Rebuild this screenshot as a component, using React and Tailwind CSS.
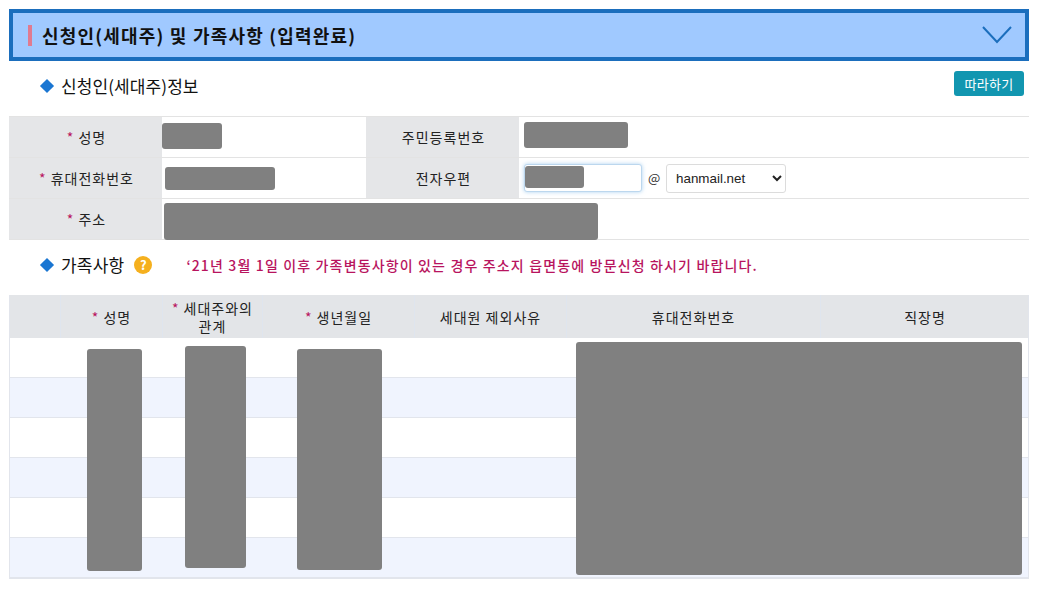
const FONT = "font-['Malgun_Gothic','Noto_Sans_CJK_KR','Liberation_Sans',sans-serif]"

const Star = () => <span className="text-[#b8145e] mr-1">*</span>

// grey scribble that hides personal data
const Redact = ({ className }) => (
    <div className={`absolute bg-[#808080] rounded-[3px] ${className}`}></div>
)

const Diamond = () => (
    <span className="inline-block w-[10px] h-[10px] rotate-45 bg-[#1a76d2] shrink-0"></span>
)

const Label = ({ children, required }) => (
    <div className="bg-[#e5e6e8] flex items-center justify-center text-sm tracking-[1px] pb-px pl-[2px] text-[#222]">
        {required && <Star />}
        {children}
    </div>
)

const columns = [
    { key: 'blank', label: '' },
    { key: 'name', label: '성명', required: true },
    { key: 'relation', label: '세대주와의 관계', required: true, wrap: true },
    { key: 'birth', label: '생년월일', required: true },
    { key: 'reason', label: '세대원 제외사유' },
    { key: 'phone', label: '휴대전화번호' },
    { key: 'work', label: '직장명' },
]

const rows = [0, 1, 2, 3, 4, 5]

const App = () => {
    return (
        <div className={`w-[1037px] h-[592px] bg-white overflow-hidden pt-[9px] pl-[9px] text-[#222] ${FONT}`}>
            {/* Section header */}
            <div className="w-[1020px] h-[52px] bg-[#a0c9ff] border-4 border-[#1b6ebd] flex items-center justify-between pl-[15px] pr-[13px]">
                <div className="flex items-center gap-[10px]">
                    <span className="w-1 h-[21px] bg-[#e07a90]"></span>
                    <h2 className="text-[18px] font-semibold tracking-[1.2px] text-[#111]">신청인(세대주) 및 가족사항 (입력완료)</h2>
                </div>
                <svg width="30" height="18" viewBox="0 0 30 18" fill="none" stroke="#1b6ebd" strokeWidth="2">
                    <polyline points="1,1 15,16 29,1" />
                </svg>
            </div>

            {/* Applicant info */}
            <div className="w-[1015px] h-[55px] flex items-center justify-between pl-[33px]">
                <div className="flex items-center gap-[9px] pb-[6px]">
                    <Diamond />
                    <h3 className="text-[17px] tracking-[0.1px] text-[#111]">신청인(세대주)정보</h3>
                </div>
                <button className="w-[70px] h-[25px] mb-[10px] bg-[#1296b0] text-white text-[13px] rounded-[3px] tracking-[0.3px]">따라하기</button>
            </div>

            <div className="relative w-[1020px] grid grid-cols-[153px_204px_153px_510px] grid-rows-[41px_41px_41px] border-t border-[#e3e3e3] [&>*]:border-b [&>*]:border-[#e3e3e3]">
                <Label required>성명</Label>
                <div className="relative">
                    <Redact className="left-0 top-[6px] w-[60px] h-[26px]" />
                </div>
                <Label>주민등록번호</Label>
                <div className="relative">
                    <Redact className="left-[5px] top-[5px] w-[104px] h-[26px]" />
                </div>

                <Label required>휴대전화번호</Label>
                <div className="relative">
                    <Redact className="left-[3px] top-[9px] w-[110px] h-[23px]" />
                </div>
                <Label>전자우편</Label>
                <div className="relative flex items-center pl-[5px]">
                    <input className="w-[118px] h-[28px] border border-[#bcd7ee] rounded-[3px] shadow-[0_0_4px_rgba(120,180,230,0.6)] bg-white" readOnly />
                    <span className="mx-[6px] text-[13px] text-[#333] w-[12px] text-center">@</span>
                    <select defaultValue="hanmail.net" className="w-[120px] h-[29px] border border-[#dcdcdc] rounded-[3px] pl-[5px] text-[13.4px] text-[#222] font-['Liberation_Sans',sans-serif] bg-white">
                        <option>hanmail.net</option>
                    </select>
                    <Redact className="left-[6px] top-[8px] w-[59px] h-[22px]" />
                </div>

                <Label required>주소</Label>
                <div className="relative col-span-3">
                    <Redact className="left-[2px] top-[4px] w-[434px] h-[37px]" />
                </div>
            </div>

            {/* Family info */}
            <div className="h-[55px] flex items-center pl-[33px] pb-[6px]">
                <Diamond />
                <h3 className="text-[17px] tracking-[0.2px] text-[#111] ml-[9px]">가족사항</h3>
                <span className="w-[18px] h-[18px] rounded-full bg-[#f5b01e] text-white text-[13px] font-bold flex items-center justify-center ml-[10px]">?</span>
                <p className="ml-[34px] text-sm font-medium text-[#b8145e] tracking-[1.15px] whitespace-nowrap">
                    ‘21년 3월 1일 이후 가족변동사항이 있는 경우 주소지 읍면동에 방문신청 하시기 바랍니다.
                </p>
            </div>

            <div className="relative w-[1020px] border-x border-b border-[#e2e5ec]">
                <div className="grid grid-cols-[51px_102px_100px_152px_152px_254px_208px] h-[43px] bg-[#e3e5e8]">
                    {columns.map(col => (
                        <div key={col.key} className="flex items-center justify-center text-center text-sm leading-[18px] tracking-[1px] text-[#222] border-r border-[#dfe5ee] last:border-r-0">
                            <span className={col.wrap ? 'w-[90px]' : ''}>
                                {col.required && <Star />}
                                {col.label}
                            </span>
                        </div>
                    ))}
                </div>
                {rows.map(i => (
                    <div key={i} className={`h-[40px] border-b border-[#e2e5ec] last:border-b-0 ${i % 2 ? 'bg-[#f0f4fe]' : 'bg-white'}`}></div>
                ))}
                <Redact className="left-[77px] top-[54px] w-[55px] h-[222px]" />
                <Redact className="left-[175px] top-[51px] w-[61px] h-[222px]" />
                <Redact className="left-[287px] top-[54px] w-[85px] h-[221px]" />
                <Redact className="left-[566px] top-[47px] w-[446px] h-[233px]" />
            </div>
        </div>
    )
}

export default App
